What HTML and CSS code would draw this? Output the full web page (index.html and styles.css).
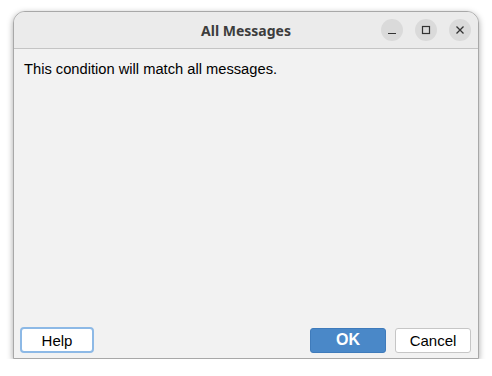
FILE: index.html
```html
<!DOCTYPE html>
<html lang="en">
<head>
    <meta charset="UTF-8">
    <title>All Messages</title>
    <link rel="stylesheet" href="styles.css">
</head>
<body>
    <div class="window">
        <div class="titlebar">
            <span class="title">All Messages</span>
            <div class="controls">
                <span class="ctl">
                    <svg width="10" height="10" viewBox="0 0 10 10"><path d="M1 8.5h8" stroke="#333" stroke-width="1.2"/></svg>
                </span>
                <span class="ctl">
                    <svg width="10" height="10" viewBox="0 0 10 10"><rect x="1.5" y="1.5" width="7" height="7" fill="none" stroke="#333" stroke-width="1.2"/></svg>
                </span>
                <span class="ctl">
                    <svg width="10" height="10" viewBox="0 0 10 10"><path d="M1.5 1.5l7 7M8.5 1.5l-7 7" stroke="#333" stroke-width="1.3"/></svg>
                </span>
            </div>
        </div>
        <div class="content">
            <p class="message">This condition will match all messages.</p>
        </div>
        <div class="footer">
            <button class="btn btn-focus">Help</button>
            <div class="spacer"></div>
            <button class="btn btn-primary">OK</button>
            <button class="btn">Cancel</button>
        </div>
    </div>
</body>
</html>
```

FILE: styles.css
```css
body {
    margin: 0;
    background-color: #fff;
    font-family: 'Liberation Sans', Arial, sans-serif;
}
.window {
    margin: 11px 0 0 13px;
    width: 466px;
    height: 348px;
    box-sizing: border-box;
    display: flex;
    flex-direction: column;
    background-color: #f2f2f2;
    border: 1px solid #a8a8a8;
    border-radius: 12px 12px 0 0;
    box-shadow: 0 2px 6px rgba(0, 0, 0, 0.35);
    overflow: hidden;
}
.titlebar {
    position: relative;
    height: 36px;
    flex: none;
    display: flex;
    align-items: center;
    justify-content: center;
    background-color: #ebebeb;
    border-bottom: 1px solid #c4c4c4;
}
.title {
    font-family: 'Noto Sans', 'DejaVu Sans', sans-serif;
    font-weight: bold;
    font-size: 14px;
    color: #3d3d3d;
}
.controls {
    position: absolute;
    right: 7px;
    top: 7px;
    display: flex;
    gap: 12px;
}
.ctl {
    width: 22px;
    height: 22px;
    border-radius: 50%;
    background-color: #dadada;
    display: flex;
    align-items: center;
    justify-content: center;
}
.content {
    flex: 1;
    padding: 11px 10px;
}
.message {
    margin: 0;
    font-size: 14.7px;
    line-height: 18px;
    color: #000;
}
.footer {
    display: flex;
    align-items: center;
    gap: 9px;
    padding: 0 7px 5px 6px;
}
.spacer {
    flex: 1;
}
.btn {
    width: 76px;
    height: 25px;
    box-sizing: border-box;
    font-family: 'Liberation Sans', Arial, sans-serif;
    font-size: 15px;
    color: #000;
    background-color: #fff;
    border: 1px solid #c6c6c6;
    border-radius: 3px;
    padding: 0;
}
.btn-focus {
    width: 74px;
    height: 26px;
    border: 2px solid #8db9e6;
    border-radius: 4px;
}
.btn-primary {
    background-color: #4a88c8;
    border-color: #3f7bbb;
    color: #fff;
    font-weight: bold;
    font-size: 16px;
}
```
